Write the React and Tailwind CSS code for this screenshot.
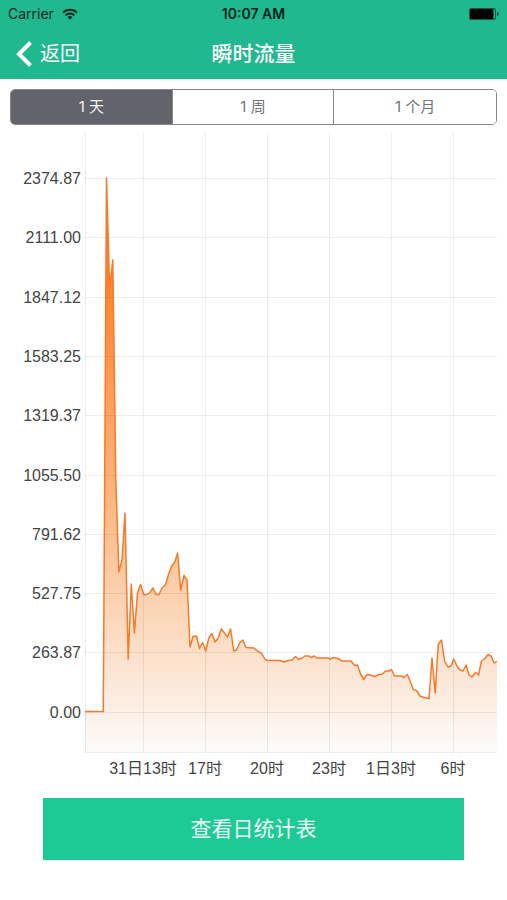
import React, { useState } from "react";

const yTicks = [
  ["2374.87", 178], ["2111.00", 237], ["1847.12", 297], ["1583.25", 356], ["1319.37", 415],
  ["1055.50", 475], ["791.62", 534], ["527.75", 593], ["263.87", 652], ["0.00", 712],
];

const xTicks = [
  ["31日13时", 143], ["17时", 205], ["20时", 267], ["23时", 329], ["1日3时", 391], ["6时", 453],
];

const line =
  "85,711.5 103.3,711.5 106.5,178 109.6,288 112.8,260 115.8,480 118.9,572 122,560 125,513 128.2,659 131.3,584 134.4,633 137.5,593 140.5,584.5 143.7,594.5 147,594.5 150,592.5 153,588 156,594.5 159,594.5 162,588 165.5,585 168.6,574 171.7,566 174.8,562 177.6,553 180.7,590 184,575.5 187,580 190,647 193,636.5 196.5,636 199.5,648.5 202.6,642.5 205.7,651 208.8,638 211.8,633.5 215,642 218,638.5 221.3,629 224.5,633 227.5,637 230.6,629 233.7,651 236.5,650 239.6,643 242.8,640 246,647.5 254,648 258,651.5 261.5,653 265,659.5 268,660.5 280,660.5 284,662 288,660.5 292,660 295.5,656.5 298.5,659.5 302,658 305,656 309,656 311,657.5 314,656 317,658 328,658 330,659 334,657.5 338,658.5 342,661 351,661 354.5,665.5 357.5,665 360.5,674 363.7,679.5 367,674.5 370,675 375,676.5 379,674.5 382.5,674 385.5,671 389,671 391.5,669.5 394.5,676 401.5,676 404,677.5 407.3,674.5 410.5,682 413.5,690 416.5,690.5 420,696 424,697.5 429,698.5 432,658 435.2,693 438.3,644 441.5,640 444.6,661 448,667 451,666 453.7,659 457,666 460,670 463,671 466,665 469,675 472,677 475.5,672.5 478.5,675 481.5,661 485,658.5 488,654.5 491,656 494,663 497,661";

function StatusBar() {
  return (
    <div className="grid h-7 grid-cols-3 items-center px-2 text-sm text-[#06251b]">
      <div className="flex items-center gap-2">
        <span>Carrier</span>
        <svg width="16" height="12" viewBox="0 0 16 12" fill="none" stroke="currentColor" strokeWidth="2" aria-hidden="true">
          <path d="M1 4.6a10 10 0 0 1 14 0M3.6 7.4a6.3 6.3 0 0 1 8.8 0" />
          <path d="M5.5 9.1a3.7 3.7 0 0 1 5 0L8 11.8z" fill="currentColor" stroke="none" />
        </svg>
      </div>
      <span className="text-center font-semibold whitespace-nowrap">10:07 AM</span>
      <svg className="justify-self-end" width="30" height="12" viewBox="0 0 30 12" aria-hidden="true">
        <rect x="0.5" y="0.5" width="26" height="11" rx="1.5" fill="none" stroke="#0a5c44" />
        <rect x="1" y="1" width="23.5" height="10" rx="1" fill="#000" />
        <path d="M28 4v4q1.6-.5 1.6-2T28 4" fill="#06251b" />
      </svg>
    </div>
  );
}

function Segments() {
  const [active, setActive] = useState(0);
  return (
    <div className="mx-[10px] mt-[10px] grid h-9 grid-cols-3 divide-x divide-[#85858a] overflow-hidden rounded-[5px] border border-[#85858a] font-[Inter,'Noto_Sans_CJK_SC',sans-serif] text-[15px]">
      {["1 天", "1 周", "1 个月"].map((label, i) => (
        <button
          key={label}
          type="button"
          aria-pressed={active === i}
          onClick={() => setActive(i)}
          className={active === i ? "bg-[#63636b] text-[#f2f2f4]" : "bg-white text-[#73737a]"}
        >
          {label}
        </button>
      ))}
    </div>
  );
}

function Chart() {
  return (
    <svg viewBox="0 125 507 661" className="block w-full" role="img" aria-label="瞬时流量">
      <defs>
        <linearGradient id="flow" gradientUnits="userSpaceOnUse" x1="0" y1="178" x2="0" y2="752">
          <stop offset="0" stopColor="#ff6a0a" />
          <stop offset="0.2" stopColor="#ff8632" />
          <stop offset="0.55" stopColor="#fbb57f" />
          <stop offset="0.75" stopColor="#fbd5b5" />
          <stop offset="0.9" stopColor="#fcebdf" />
          <stop offset="1" stopColor="#fdfbfa" />
        </linearGradient>
      </defs>
      <polygon points={`85,752 ${line} 497,752`} fill="url(#flow)" />
      <g stroke="#000" strokeOpacity="0.07" strokeWidth="1" shapeRendering="crispEdges">
        {yTicks.map(([label, y]) => <line key={label} x1="85" x2="497" y1={y} y2={y} />)}
        {xTicks.map(([label, x]) => <line key={label} x1={x} x2={x} y1="133" y2="752" />)}
        <line x1="85" x2="85" y1="133" y2="752" />
        <line x1="85" x2="497" y1="752" y2="752" />
      </g>
      <polyline points={line} fill="none" stroke="#f57a2b" strokeWidth="1.5" strokeLinejoin="round" />
      <g fill="#444" className="text-base">
        {yTicks.map(([label, y]) => <text key={label} x="81" y={y + 6} textAnchor="end">{label}</text>)}
        {xTicks.map(([label, x]) => <text key={label} x={x} y="774" textAnchor="middle">{label}</text>)}
      </g>
    </svg>
  );
}

export default function App() {
  return (
    <div className="min-h-screen bg-white font-['Liberation_Sans','Noto_Sans_CJK_SC',sans-serif]">
      <header className="bg-[#20b88e] font-[Inter,'Noto_Sans_CJK_SC',sans-serif]">
        <StatusBar />
        <div className="grid h-[51px] grid-cols-3 items-center px-4 text-white">
          <button type="button" className="flex items-center gap-2 text-xl">
            <svg width="16" height="26" viewBox="0 0 16 26" fill="none" stroke="currentColor" strokeWidth="4" aria-hidden="true">
              <path d="M14.5 1.5 3 13l11.5 11.5" />
            </svg>
            返回
          </button>
          <h1 className="text-center text-[21px] font-medium whitespace-nowrap">瞬时流量</h1>
        </div>
      </header>
      <main>
        <Segments />
        <Chart />
        <div className="mx-[43px] mt-3">
          <button type="button" className="h-[62px] w-full bg-[#1dca95] text-[21px] text-[#ebfff8]">
            查看日统计表
          </button>
        </div>
      </main>
    </div>
  );
}
